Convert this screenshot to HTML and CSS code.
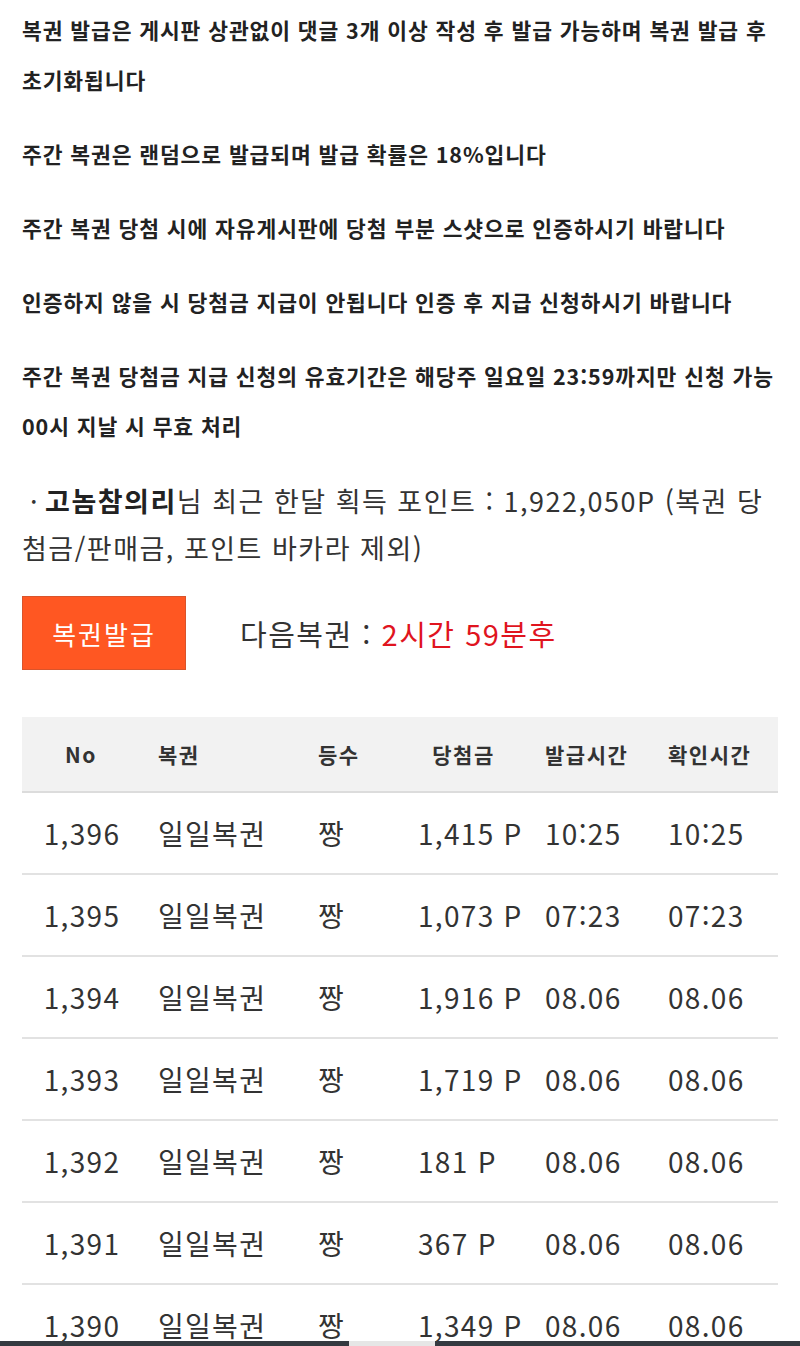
FILE: index.html
```html
<!DOCTYPE html>
<html lang="ko">
<head>
<meta charset="utf-8">
<link rel="stylesheet" href="styles.css">
</head>
<body>
<div class="page">
  <div class="notice">
    <p>복권 발급은 게시판 상관없이 댓글 3개 이상 작성 후 발급 가능하며 복권 발급 후 초기화됩니다</p>
    <p>주간 복권은 랜덤으로 발급되며 발급 확률은 18%입니다</p>
    <p>주간 복권 당첨 시에 자유게시판에 당첨 부분 스샷으로 인증하시기 바랍니다</p>
    <p>인증하지 않을 시 당첨금 지급이 안됩니다 인증 후 지급 신청하시기 바랍니다</p>
    <p>주간 복권 당첨금 지급 신청의 유효기간은 해당주 일요일 23:59까지만 신청 가능 00시 지날 시 무효 처리</p>
  </div>
  <div class="points"><span class="dot">·</span><b>고놈참의리</b>님 최근 한달 획득 포인트 : 1,922,050P (복권 당첨금/판매금, 포인트 바카라 제외)</div>
  <div class="issue">
    <button class="btn">복권발급</button>
    <div class="next">다음복권 : <span class="red">2시간 59분후</span></div>
  </div>
  <table class="list">
    <colgroup>
      <col class="c1"><col class="c2"><col class="c3"><col class="c4"><col class="c5"><col class="c6">
    </colgroup>
    <thead>
      <tr><th class="ctr">No</th><th>복권</th><th>등수</th><th class="ctr">당첨금</th><th>발급시간</th><th>확인시간</th></tr>
    </thead>
    <tbody>
      <tr><td class="ctr">1,396</td><td>일일복권</td><td>짱</td><td>1,415 P</td><td>10:25</td><td>10:25</td></tr>
      <tr><td class="ctr">1,395</td><td>일일복권</td><td>짱</td><td>1,073 P</td><td>07:23</td><td>07:23</td></tr>
      <tr><td class="ctr">1,394</td><td>일일복권</td><td>짱</td><td>1,916 P</td><td>08.06</td><td>08.06</td></tr>
      <tr><td class="ctr">1,393</td><td>일일복권</td><td>짱</td><td>1,719 P</td><td>08.06</td><td>08.06</td></tr>
      <tr><td class="ctr">1,392</td><td>일일복권</td><td>짱</td><td>181 P</td><td>08.06</td><td>08.06</td></tr>
      <tr><td class="ctr">1,391</td><td>일일복권</td><td>짱</td><td>367 P</td><td>08.06</td><td>08.06</td></tr>
      <tr><td class="ctr">1,390</td><td>일일복권</td><td>짱</td><td>1,349 P</td><td>08.06</td><td>08.06</td></tr>
    </tbody>
  </table>
</div>
<div class="navbar"><div class="navdark"></div><div class="navlight"></div><div class="navdark"></div></div>
</body>
</html>
```

FILE: styles.css
```css
html, body {
  margin: 0;
  padding: 0;
  background: #fff;
}
body {
  font-family: "Noto Sans CJK KR", "Noto Sans", sans-serif;
  color: #333;
  overflow: hidden;
  height: 1346px;
}
.page {
  padding: 5px 22px 0 22px;
}
.notice p {
  margin: 0 0 24px 0;
  font-size: 21.5px;
  font-weight: 700;
  line-height: 50px;
  color: #222;
  letter-spacing: 0.9px;
  word-break: keep-all;
}
.notice p:last-child {
  margin-bottom: 26px;
}
.points {
  font-size: 27px;
  line-height: 47px;
  color: #333;
  letter-spacing: 1.5px;
}
.points .dot {
  margin: 0 6px 0 8px;
}
.points b {
  font-weight: 700;
  color: #222;
}
.issue {
  display: flex;
  align-items: center;
  gap: 54px;
  margin-top: 25px;
}
.btn {
  width: 164px;
  height: 74px;
  background: #ff5722;
  border: 1px solid #d9542b;
  color: #fff;
  font-family: inherit;
  font-size: 26px;
  letter-spacing: 2px;
  padding: 0;
}
.next {
  font-size: 29px;
  letter-spacing: 1.5px;
  color: #333;
}
.red {
  color: #e0141e;
}
.list {
  margin-top: 47px;
  width: 756px;
  border-collapse: collapse;
  table-layout: fixed;
}
.c1 { width: 118px; }
.c2 { width: 160px; }
.c3 { width: 100px; }
.c4 { width: 127px; }
.c5 { width: 123px; }
.c6 { width: 128px; }
.list th {
  background: #f2f2f2;
  height: 74px;
  padding: 0 0 0 18px;
  text-align: left;
  font-size: 21px;
  font-weight: 700;
  color: #333;
  letter-spacing: 1.5px;
  border-bottom: 2px solid #dcdcdc;
}
.list td {
  height: 80px;
  padding: 0 0 0 18px;
  font-size: 28px;
  line-height: 36px;
  color: #333;
  border-bottom: 2px solid #e2e2e2;
  white-space: nowrap;
  letter-spacing: 1.3px;
}
.list .ctr {
  text-align: center;
  padding-left: 0;
}
.list td.ctr {
  padding-left: 2px;
}
.navbar {
  position: fixed;
  left: 0;
  right: 0;
  bottom: 0;
  height: 5px;
  display: flex;
}
.navdark {
  flex: 1;
  background: #343a40;
}
.navdark:first-child {
  flex: 0 0 349px;
}
.navlight {
  flex: 0 0 86px;
  background: #e6e6e6;
}
```
